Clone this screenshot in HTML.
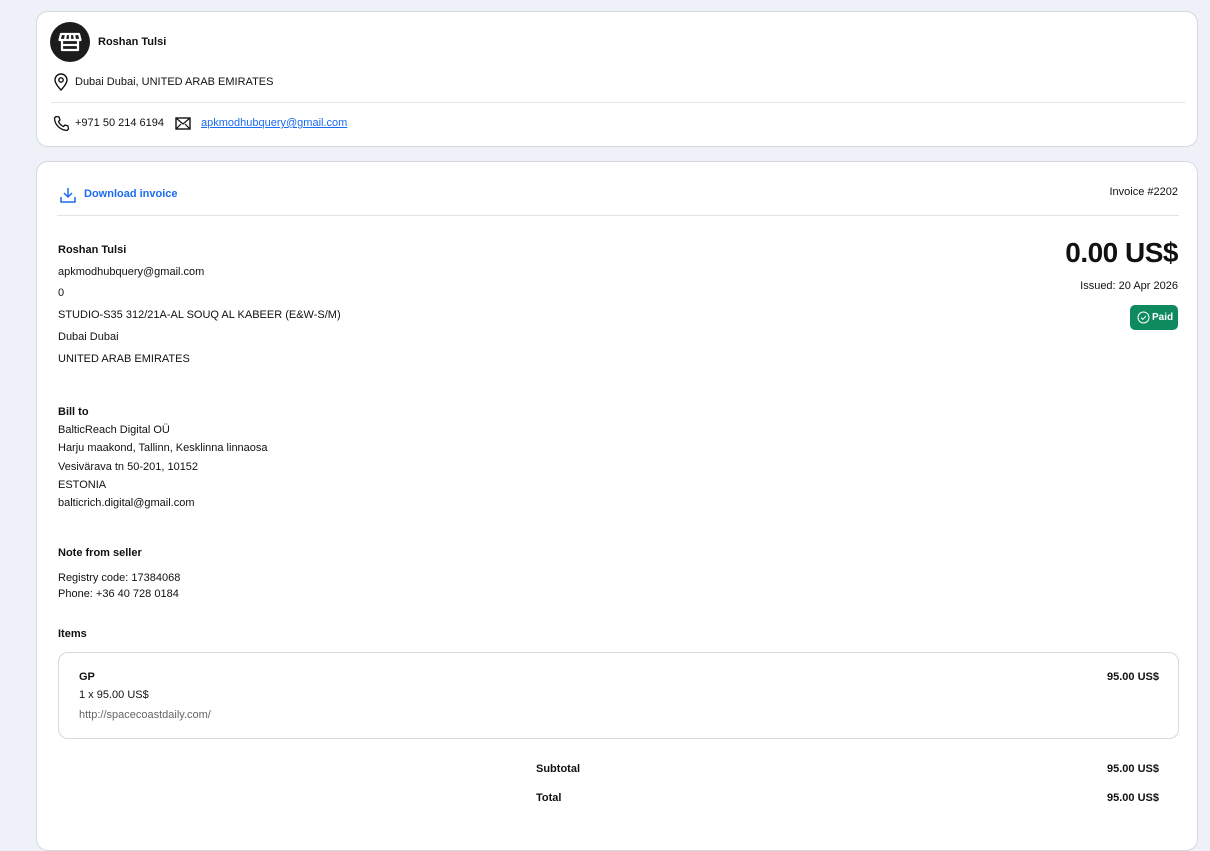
<!DOCTYPE html>
<html><head><meta charset="utf-8"><style>
*{box-sizing:border-box;margin:0;padding:0}
body{width:1210px;height:836px;overflow:hidden;background:#eef1f8;font-family:"Liberation Sans",sans-serif;font-size:11px;color:#111;position:relative}
.card{position:absolute;left:36px;width:1162px;background:#fff;border:1px solid #d5d8de;border-radius:12px}
.a{position:absolute;white-space:nowrap}
b{font-weight:bold}
</style></head><body>
<div class="card" style="top:11px;height:136px">
  <div class="a" style="left:13px;top:10px;width:40px;height:40px;border-radius:50%;background:#1c1c1c">
    <svg width="40" height="40" viewBox="0 0 40 40"><g fill="none" stroke="#fff" stroke-width="2.2" stroke-linejoin="round"><path d="M11 12h18l1.5 6h-21z"/><path d="M12 18v10h16V18"/><path d="M16 12l-1 6M20 12v6M24 12l1 6"/><path d="M12 23h16"/></g></svg>
  </div>
  <div class="a" style="left:61px;top:24px"><b>Roshan Tulsi</b></div>
  <svg class="a" style="left:16px;top:61px" width="16" height="18" viewBox="0 0 16 18"><path d="M8 17s-6-6-6-10a6 6 0 0 1 12 0c0 4-6 10-6 10z" fill="none" stroke="#111" stroke-width="1.4"/><circle cx="8" cy="7" r="2.2" fill="none" stroke="#111" stroke-width="1.4"/></svg>
  <div class="a" style="left:38px;top:64px">Dubai Dubai, UNITED ARAB EMIRATES</div>
  <div class="a" style="left:14px;top:90px;width:1134px;height:1px;background:#e2e4e8"></div>
  <svg class="a" style="left:16px;top:103px" width="17" height="17" viewBox="0 0 17 17"><path d="M3 1.5l3 .5 1 3-1.5 1.5a9 9 0 0 0 5 5L12 10l3 1 .5 3-1.5 1.5C7 15 1.5 9.5 1.5 3z" fill="none" stroke="#111" stroke-width="1.3"/></svg>
  <div class="a" style="left:38px;top:105px">+971 50 214 6194</div>
  <svg class="a" style="left:138px;top:105px" width="16" height="13" viewBox="0 0 16 13"><rect x="1" y="1" width="14" height="11" fill="none" stroke="#111" stroke-width="1.4"/><path d="M1 1l7 6 7-6M1 12l5-5M15 12l-5-5" fill="none" stroke="#111" stroke-width="1.2"/></svg>
  <div class="a" style="left:164px;top:105px;color:#1a6cf0;text-decoration:underline">apkmodhubquery@gmail.com</div>
</div>
<div class="card" style="top:161px;height:690px">
  <svg class="a" style="left:22px;top:24px" width="18" height="18" viewBox="0 0 18 18"><path d="M9 2v9M5 7l4 4 4-4M2 11v5h14v-5" fill="none" stroke="#1a6cf0" stroke-width="1.5"/></svg>
  <div class="a" style="left:47px;top:26px;color:#1a6cf0"><b>Download invoice</b></div>
  <div class="a" style="right:19px;top:24px">Invoice #2202</div>
  <div class="a" style="left:20px;top:53px;width:1122px;height:1px;background:#e2e4e8"></div>
  <div class="a" style="left:21px;top:78px;line-height:21.7px">
    <b>Roshan Tulsi</b><br>apkmodhubquery@gmail.com<br>0<br>STUDIO-S35 312/21A-AL SOUQ AL KABEER (E&amp;W-S/M)<br>Dubai Dubai<br>UNITED ARAB EMIRATES
  </div>
  <div class="a" style="right:19px;top:75px;font-size:28px;font-weight:bold;letter-spacing:-0.5px">0.00 US$</div>
  <div class="a" style="right:19px;top:118px">Issued: 20 Apr 2026</div>
  <div class="a" style="right:19px;top:143px;width:48px;height:25px;background:#0f8a5f;border-radius:5px;color:#fff;font-size:10px;font-weight:bold;line-height:25px;padding-left:22px">
    <svg class="a" style="left:7px;top:6px" width="13" height="13" viewBox="0 0 13 13"><circle cx="6.5" cy="6.5" r="5.5" fill="none" stroke="#fff" stroke-width="1"/><path d="M4 6.7l1.8 1.7 3.2-3.4" fill="none" stroke="#fff" stroke-width="1"/></svg>Paid</div>
  <div class="a" style="left:21px;top:241px;line-height:18.2px"><b>Bill to</b><br>BalticReach Digital OÜ<br>Harju maakond, Tallinn, Kesklinna linnaosa<br>Vesivärava tn 50-201, 10152<br>ESTONIA<br>balticrich.digital@gmail.com</div>
  <div class="a" style="left:21px;top:385px"><b>Note from seller</b></div>
  <div class="a" style="left:21px;top:408px;line-height:16px">Registry code: 17384068<br>Phone: +36 40 728 0184</div>
  <div class="a" style="left:21px;top:466px"><b>Items</b></div>
  <div class="a" style="left:21px;top:490px;width:1121px;height:87px;border:1px solid #d5d8de;border-radius:10px">
    <div class="a" style="left:20px;top:18px"><b>GP</b></div>
    <div class="a" style="right:19px;top:18px"><b>95.00 US$</b></div>
    <div class="a" style="left:20px;top:36px">1 x 95.00 US$</div>
    <div class="a" style="left:20px;top:56px;color:#666">http://spacecoastdaily.com/</div>
  </div>
  <div class="a" style="left:499px;top:601px"><b>Subtotal</b></div>
  <div class="a" style="right:38px;top:601px"><b>95.00 US$</b></div>
  <div class="a" style="left:499px;top:630px"><b>Total</b></div>
  <div class="a" style="right:38px;top:630px"><b>95.00 US$</b></div>
</div>
</body></html>
